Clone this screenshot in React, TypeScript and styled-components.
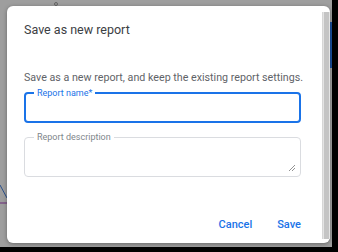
import React, { ReactElement } from 'react'
import styled, { createGlobalStyle } from 'styled-components'

const GlobalStyle = createGlobalStyle`
  html, body {
    margin: 0;
    padding: 0;
    background: #000;
  }
  body {
    font-family: Roboto, 'Noto Sans', Arial, sans-serif;
  }
`

const Page = styled.div`
  width: 338px;
  height: 252px;
  box-sizing: border-box;
  padding: 0 6px 5px 0;
  background: #000;
`

const Backdrop = styled.div`
  position: relative;
  width: 100%;
  height: 100%;
  background: #9e9e9e;
  padding: 6px 0 0 7px;
  box-sizing: border-box;
  overflow: hidden;
`

const BehindChart = styled.svg`
  position: absolute;
  left: 0;
  top: 0;
`

const Dialog = styled.div`
  position: relative;
  width: 323px;
  height: 237px;
  background: #fff;
  border-radius: 6px;
  box-shadow: 0 1px 4px rgba(0, 0, 0, 0.35);
  display: flex;
  overflow: hidden;
`

const Body = styled.div`
  flex: 1;
  padding: 15px 0 0 17px;
  display: flex;
  flex-direction: column;
`

const Title = styled.h2`
  margin: 0;
  font-size: 12.5px;
  font-weight: 400;
  line-height: 18px;
  color: #3c4043;
`

const Description = styled.p`
  margin: 31px 0 0;
  font-size: 10.7px;
  line-height: 16px;
  color: #5f6368;
  white-space: nowrap;
`

const FieldWrap = styled.div<{ $gap: number }>`
  position: relative;
  margin-top: ${(p) => p.$gap}px;
  width: 277px;
`

const Field = styled.fieldset<{ $focused?: boolean; $height: number }>`
  margin: 0;
  width: 100%;
  height: ${(p) => p.$height}px;
  box-sizing: border-box;
  padding: 0 8px;
  border: ${(p) => (p.$focused ? '2px solid #1a73e8' : '1px solid #dadce0')};
  border-radius: 4px;
  min-width: 0;
`

const Legend = styled.legend<{ $focused?: boolean }>`
  padding: 0 3px;
  margin-left: ${(p) => (p.$focused ? '0' : '1px')};
  font-size: 9px;
  line-height: 10px;
  color: ${(p) => (p.$focused ? '#1a73e8' : '#80868b')};
`

const ResizeGrip = styled.svg`
  position: absolute;
  right: 5px;
  bottom: 5px;
`

const Actions = styled.div`
  margin-top: auto;
  margin-bottom: 10px;
  width: 277px;
  display: flex;
  justify-content: flex-end;
  gap: 25px;
`

const TextButton = styled.button`
  border: none;
  background: none;
  padding: 0;
  font-family: inherit;
  font-size: 11px;
  font-weight: 500;
  line-height: 16px;
  color: #1a73e8;
  cursor: pointer;
`

const Scrollbar = styled.div`
  width: 7px;
  margin: 6px 0 4px;
  background: #e4e4e4;
  border-left: 1px solid #d6d6d6;
  display: flex;
`

const Thumb = styled.div`
  flex: 1;
  margin: 0 1px;
  background: #c4c4c4;
`

function App(): ReactElement {
  return (
    <>
      <GlobalStyle />
      <Page>
        <Backdrop>
          <BehindChart width="332" height="247">
            <rect x="329" y="22" width="4" height="46" fill="#1a4f9c" />
            <line x1="0" y1="185" x2="7" y2="198" stroke="#2a4f8a" strokeWidth="1" />
            <line x1="0" y1="203" x2="7" y2="203" stroke="#6a2a7a" strokeWidth="1" />
            <circle cx="56" cy="4" r="1.5" fill="none" stroke="#555" strokeWidth="0.8" />
          </BehindChart>
          <Dialog>
            <Body>
              <Title>Save as new report</Title>
              <Description>Save as a new report, and keep the existing report settings.</Description>
              <FieldWrap $gap={2}>
                <Field $focused $height={35}>
                  <Legend $focused>Report name*</Legend>
                </Field>
              </FieldWrap>
              <FieldWrap $gap={9}>
                <Field $height={45}>
                  <Legend>Report description</Legend>
                </Field>
                <ResizeGrip width="8" height="8" viewBox="0 0 8 8">
                  <line x1="1" y1="7" x2="7" y2="1" stroke="#777" strokeWidth="0.8" />
                  <line x1="4" y1="7" x2="7" y2="4" stroke="#777" strokeWidth="0.8" />
                </ResizeGrip>
              </FieldWrap>
              <Actions>
                <TextButton>Cancel</TextButton>
                <TextButton>Save</TextButton>
              </Actions>
            </Body>
            <Scrollbar>
              <Thumb />
            </Scrollbar>
          </Dialog>
        </Backdrop>
      </Page>
    </>
  )
}

export default App
